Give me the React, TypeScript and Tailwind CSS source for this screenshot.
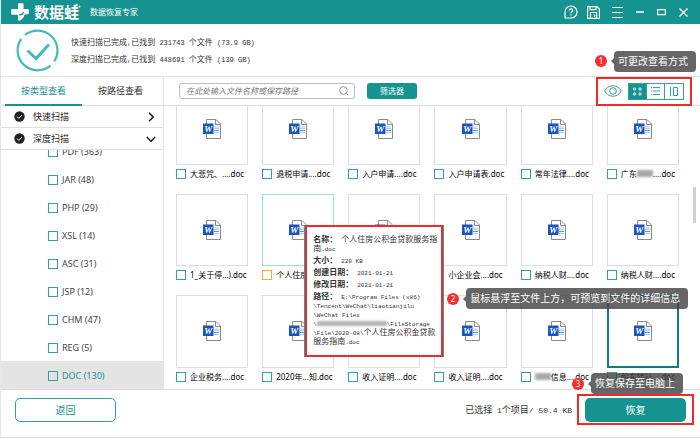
import React from "react";

const fileTypes = [
	{ name: "PDF", count: 363 },
	{ name: "JAR", count: 48 },
	{ name: "PHP", count: 29 },
	{ name: "XSL", count: 14 },
	{ name: "ASC", count: 31 },
	{ name: "JSP", count: 12 },
	{ name: "CHM", count: 47 },
	{ name: "REG", count: 5 },
	{ name: "DOC", count: 130, active: true },
];

type FileItem = {
	name: string;
	hidden?: "before" | "after";
	rest?: string;
	state?: "hover" | "selected";
};

const files: FileItem[] = [
	{ name: "大悲咒、....doc" },
	{ name: "退税申请....doc" },
	{ name: "入户申请....doc" },
	{ name: "入户申请表.doc" },
	{ name: "常年法律....doc" },
	{ name: "广东", hidden: "after", rest: "....doc" },
	{ name: "1_关于停...).doc" },
	{ name: "个人住房....doc", state: "hover" },
	{ name: "个人住房....doc" },
	{ name: "小企业会....doc" },
	{ name: "纳税人财....doc" },
	{ name: "纳税人财....doc" },
	{ name: "企业税务....doc" },
	{ name: "2020年...知.doc" },
	{ name: "收入证明....doc" },
	{ name: "收入证明....doc" },
	{ name: "信息....doc", hidden: "before" },
	{ name: "股东转让....doc", state: "selected" },
];

// "*" marks the part of the path that is masked out
const details = [
	{ term: "名称：", lines: ["个人住房公积金贷款服务指", "南.doc"] },
	{ term: "大小：", lines: ["220 KB"] },
	{ term: "创建日期：", lines: ["2021-01-21"] },
	{ term: "修改日期：", lines: ["2021-01-21"] },
	{
		term: "路径：",
		lines: [
			"E:\\Program Files (x86)",
			"\\Tencent\\WeChat\\liaotianjilu",
			"\\WeChat Files",
			"\\*\\FileStorage",
			"\\File\\2020-08\\个人住房公积金贷款",
			"服务指南.doc",
		],
	},
];

// Latin runs go in a narrow mono face, Chinese keeps the surrounding font
const Mixed: React.FC<{ text: string; latin: string }> = ({ text, latin }) => (
	<>
		{text.split(/([\x20-\x7e]+)/).map((part, i) =>
			i % 2 ? (
				<span key={i} className={`font-['Liberation_Mono',monospace] leading-none whitespace-pre ${latin}`}>{part}</span>
			) : (
				part
			)
		)}
	</>
);

const CheckBox: React.FC<{ className?: string }> = ({ className = "border-[#35a0a0]" }) => (
	<input type="checkbox" className={`size-[10px] shrink-0 appearance-none border ${className}`} />
);

const WordIcon: React.FC = () => (
	<svg width="18" height="20" viewBox="0 0 18 20" aria-hidden="true">
		<path d="M3.5.5h9.5l4.5 4.5v14.5h-14z" fill="#fff" stroke="#8a8a8a" />
		<path d="M12.5.5v5h5" fill="none" stroke="#8a8a8a" />
		<path d="M11 8h5M11 9.5h5" stroke="#a5d0f8" />
		<path d="M11 11.5h5" stroke="#4a97e6" />
		<path d="M11 13.5h5" stroke="#a5d0f8" />
		<rect x="0" y="4.5" width="10.5" height="10.5" fill="#1a55bf" />
		<text x="5.2" y="13" textAnchor="middle" fontSize="9" fontWeight="bold" fontStyle="italic" fontFamily="Liberation Serif, serif" fill="#fff">W</text>
	</svg>
);

const Callout: React.FC<{ number: number; text: string }> = ({ number, text }) => (
	<div className="flex items-center whitespace-nowrap">
		<span className="flex size-3 items-center justify-center rounded-full bg-[#f52f2f] text-[8px] text-white">{number}</span>
		<span className="ml-1 border-y-[3px] border-r-[3px] border-y-transparent border-r-[#666]" />
		<span className="rounded-sm bg-[#404040]/80 pr-2 pl-1 text-[10px] leading-[21px] text-white">{text}</span>
	</div>
);

const FileTooltip: React.FC = () => (
	<div className="absolute top-[31px] left-[42px] z-10 border-x border-[#35a0a0] text-[8px] leading-[9px] whitespace-nowrap text-[#333]">
		<dl className="flex h-[132px] w-[138px] flex-col gap-[3px] border-2 border-[#f02a2a] bg-white px-[6px] pt-[7px]">
			{details.map((detail) => (
				<div key={detail.term}>
					<dt className="float-left mr-1 h-[9px] font-bold">{detail.term}</dt>
					<dd>
						{detail.lines.map((line) => (
							<span key={line} className="block h-[9px]">
								{line.split("*").map((part, i) => (
									<React.Fragment key={i}>
										{i > 0 && <span className="inline-block h-[5px] w-[70px] bg-[#b5b5b5] blur-[1px]" />}
										<Mixed text={part} latin="text-[6px]" />
									</React.Fragment>
								))}
							</span>
						))}
					</dd>
				</div>
			))}
		</dl>
		<div className="absolute top-[63px] left-[142px]">
			<Callout number={2} text="鼠标悬浮至文件上方，可预览到文件的详细信息" />
		</div>
	</div>
);

const FileCard: React.FC<{ file: FileItem }> = ({ file }) => {
	const border =
		file.state === "selected" ? "border-2 border-[#147c7c]" : file.state === "hover" ? "border border-[#9adfdc]" : "border border-[#dedede]";
	const blurred = <span className="inline-block h-[7px] w-4 bg-[#a9a9a9] align-baseline blur-[1px]" />;

	return (
		<div className="relative">
			<div className={`flex aspect-square items-center justify-center ${border}`}>
				<WordIcon />
			</div>
			<label className="mt-1 flex h-[10px] items-center gap-1 text-[8px] whitespace-nowrap text-black">
				<CheckBox className={file.state === "hover" ? "border-[#f5a83c]" : "border-[#35a0a0]"} />
				<span>
					{file.hidden === "before" && blurred}
					{file.name}
					{file.hidden === "after" && blurred}
					{file.rest}
				</span>
			</label>
			{file.state === "hover" && <FileTooltip />}
		</div>
	);
};

const TitleBar: React.FC = () => (
	<header className="flex h-6 shrink-0 items-center bg-[#169290] pr-3 pl-[10px] text-white">
		<svg width="18" height="18" viewBox="0 0 18 18" aria-hidden="true">
			<path d="M7 1.5c0-.8.5-1.3 1.3-1.3h3c.8 0 1.3.5 1.3 1.3V6h4c.8 0 1.2.5 1.2 1.2v2.6c0 1-.5 1.5-1.2 1.5l-3 .2c-.5 2.5-2 4.8-4.8 6.1-1 .4-1.8-.2-1.8-1v-4.8H1.5c-.8 0-1.3-.5-1.3-1.3V7.3C.2 6.5.7 6 1.5 6H7z" fill="#fff" />
			<path d="M8 11.7c2.2.4 4-.5 4.8-2.4" fill="none" stroke="#169290" strokeWidth="1.2" />
		</svg>
		<h1 className="ml-[5px] text-[15px] leading-6 font-bold">数据蛙</h1>
		<svg className="mb-3 -ml-1" width="6" height="6" viewBox="0 0 6 6" aria-hidden="true">
			<circle cx="1.5" cy="2" r="1.2" fill="#fff" />
			<circle cx="4.5" cy="3.5" r="1" fill="#fff" />
		</svg>
		<p className="ml-[9px] text-[8px]">数据恢复专家</p>
		<div className="ml-auto flex items-center">
			<button type="button" aria-label="帮助">
				<svg width="14" height="14" viewBox="0 0 14 14" fill="none" stroke="#fff" strokeWidth="1.2">
					<path d="M1 13V7a6 6 0 1 1 6 6z" />
					<path d="M5.3 5.6c0-2.2 3.5-2.2 3.5 0C8.800 6.9 7 6.8 7 8.3M7 9.3v1.3" />
				</svg>
			</button>
			<button type="button" aria-label="保存" className="ml-[9px]">
				<svg width="13" height="13" viewBox="0 0 13 13" fill="none" stroke="#fff" strokeWidth="1.2">
					<path d="M.6.6h9.4l2.4 2.4v9.4H.6z" />
					<path d="M3 .6v3h6v-3M3.5 12.4V6.5h6v5.900M7.5 8.5v2.5" />
				</svg>
			</button>
			<button type="button" aria-label="菜单" className="ml-3">
				<svg width="11" height="11" viewBox="0 0 11 11" stroke="#fff"><path d="M0 .5h11M0 5.5h11M0 10.5h11" /></svg>
			</button>
			<button type="button" aria-label="最小化" className="ml-[13px]">
				<svg width="8" height="10" viewBox="0 0 8 10" stroke="#fff" strokeWidth="1.5"><path d="M0 5h8" /></svg>
			</button>
			<button type="button" aria-label="最大化" className="ml-[13px]">
				<svg width="9" height="10" viewBox="0 0 9 10" fill="none" stroke="#fff" strokeWidth="1.2"><path d="M.6 2.6h7.8v5H.6z" /></svg>
			</button>
			<button type="button" aria-label="关闭" className="ml-[13px]">
				<svg width="9" height="9" viewBox="0 0 9 9" stroke="#fff" strokeWidth="1.4"><path d="M.5.5l8 8M8.5.5l-8 8" /></svg>
			</button>
		</div>
	</header>
);

const ScanStatus: React.FC = () => (
	<section className="flex h-[53px] shrink-0 items-center gap-3 border-b border-[#e0e0e0] pl-[15px] text-[#333]">
		<svg width="43" height="43" viewBox="0 0 43 43" fill="none" stroke="#48b9bb" strokeWidth="2.2" aria-hidden="true">
			<path d="M9 5.9A20 20 0 0 1 38.2 32.5" />
			<path d="M34.5 36.7A20 20 0 0 1 5.2 10" />
			<path d="M11.5 21.5l8.5 8 13-14" strokeWidth="3" />
		</svg>
		<div className="text-[8px] leading-[17px]">
			<p><Mixed text="快速扫描已完成,已找到 231743 个文件 (73.9 GB)" latin="text-[7px]" /></p>
			<p><Mixed text="深度扫描已完成,已找到 448691 个文件 (139 GB)" latin="text-[7px]" /></p>
		</div>
	</section>
);

const SidebarGroup: React.FC<{ title: string; open?: boolean }> = ({ title, open }) => (
	<button type="button" className="flex h-[22px] shrink-0 items-center border-b border-[#dedede] pr-[7px] pl-[13px] text-[9px] text-[#222]">
		<svg width="11" height="11" viewBox="0 0 11 11" aria-hidden="true">
			<circle cx="5.5" cy="5.5" r="5.2" fill="#222" />
			<path d="M3 5.6l1.8 1.8L8 4" fill="none" stroke="#fff" />
		</svg>
		<span className="ml-2">{title}</span>
		<svg className="ml-auto" width="10" height="10" viewBox="0 0 10 10" fill="none" stroke="#111" strokeWidth="1.4" aria-hidden="true">
			<path d={open ? "M.8 3l4.2 4.2L9.2 3" : "M3 .8l4.2 4.2L3 9.2"} />
		</svg>
	</button>
);

const Sidebar: React.FC = () => (
	<aside className="flex w-[163px] shrink-0 flex-col border-r border-[#e3e7ea]">
		<div className="flex h-[29px] shrink-0 border-b border-[#dedede] px-1 text-[9px]">
			<button type="button" className="-mb-px w-1/2 border-b-2 border-[#169290] text-[#169290]">按类型查看</button>
			<button type="button" className="w-1/2 text-[#333]">按路径查看</button>
		</div>
		<SidebarGroup title="快速扫描" />
		<SidebarGroup title="深度扫描" open />
		<ul className="flex min-h-0 flex-1 flex-col justify-end overflow-hidden">
			{fileTypes.map((type) => (
				<li key={type.name} className={`shrink-0 ${type.active ? "bg-[#e4e4e4] text-[#169290]" : "text-[#444]"}`}>
					<label className="flex h-7 items-center gap-1 pt-[2px] pl-[47px] text-[9px] leading-[10px]">
						<CheckBox />
						{type.name} ({type.count})
					</label>
				</li>
			))}
		</ul>
	</aside>
);

const Toolbar: React.FC = () => (
	<div className="flex h-[29px] shrink-0 items-center border-b border-[#dedede] pr-4 pl-[15px]">
		<div className="flex h-4 w-44 items-center rounded-[3px] border border-[#bdbdbd] pr-[5px] pl-[6px]">
			<input
				type="search"
				aria-label="搜索文件"
				placeholder="在此处输入文件名称或保存路径"
				className="min-w-0 flex-1 text-[8px] italic outline-none placeholder:text-[#777]"
			/>
			<svg width="10" height="10" viewBox="0 0 10 10" fill="none" stroke="#999" aria-hidden="true">
				<circle cx="4.5" cy="4.5" r="3.8" />
				<path d="M7.2 7.2l2 2" />
			</svg>
		</div>
		<button type="button" className="ml-3 h-4 w-[50px] rounded-[3px] bg-[#169290] text-[8px] text-white">筛选器</button>

		{/* View mode switch */}
		<div className="relative ml-auto flex items-center gap-[6px]">
			<button type="button" aria-label="预览">
				<svg width="18" height="12" viewBox="0 0 18 12" fill="none" stroke="#35a0a0">
					<path d="M.7 6C4.5-1 13.5-1 17.3 6C13.5 13 4.5 13 .7 6z" />
					<circle cx="9" cy="6" r="3.3" />
				</svg>
			</button>
			<div className="flex h-[17px] divide-x divide-[#35a0a0] border border-[#35a0a0]">
				<button type="button" aria-label="图标视图" className="flex w-[18px] items-center justify-center bg-[#169290]">
					<svg width="9" height="9" viewBox="0 0 9 9" fill="none" stroke="#fff" strokeWidth=".8">
						<path d="M.5 1h2v2h-2zM6 1h2v2H6zM.5 6h2v2h-2zM6 6h2v2H6z" />
					</svg>
				</button>
				<button type="button" aria-label="列表视图" className="flex w-[18px] items-center justify-center">
					<svg width="9" height="8" viewBox="0 0 9 8" stroke="#35a0a0"><path d="M0 .5h1M2 .5h7M0 4h1M2 4h7M0 7.5h1M2 7.5h7" /></svg>
				</button>
				<button type="button" aria-label="分栏视图" className="flex w-[18px] items-center justify-center">
					<svg width="8" height="9" viewBox="0 0 8 9" fill="none" stroke="#35a0a0"><path d="M.5 0v9M3.5.5h4v8h-4z" /></svg>
				</button>
			</div>
			<span className="pointer-events-none absolute -inset-x-2 -inset-y-[6px] border-2 border-[#f02a2a]" />
			<div className="absolute -right-3 bottom-7">
				<Callout number={1} text="可更改查看方式" />
			</div>
		</div>
	</div>
);

const Footer: React.FC = () => (
	<footer className="flex h-[49px] shrink-0 items-start border-y border-[#dedede] px-[14px] pt-2">
		<button type="button" className="h-6 w-[101px] rounded-[5px] border border-[#35a0a0] text-[10px] text-[#169290]">返回</button>
		<p className="mr-[13px] ml-auto text-[9px] leading-6 text-[#333]">
			<Mixed text="已选择 1个项目/ 50.4 KB" latin="text-[8px]" />
		</p>
		<div className="relative flex">
			<button type="button" className="h-6 w-[101px] rounded-[5px] bg-[#169290] text-[10px] text-white">恢复</button>
			<span className="pointer-events-none absolute -inset-x-2 -top-1 -bottom-[3px] border-2 border-[#f02a2a]" />
			<div className="absolute right-[3px] bottom-7 z-20">
				<Callout number={3} text="恢复保存至电脑上" />
			</div>
		</div>
	</footer>
);

const App: React.FC = () => {
	return (
		<div className="flex h-screen flex-col overflow-hidden border-l border-[#e3e7ea] bg-white font-['Noto_Sans','Noto_Sans_CJK_SC',sans-serif]">
			<TitleBar />
			<ScanStatus />
			<div className="flex min-h-0 flex-1">
				<Sidebar />
				<main className="flex min-w-0 flex-1 flex-col">
					<Toolbar />
					<div className="relative min-h-0 flex-1 overflow-hidden">
						<div className="-mt-[13px] grid grid-cols-6 gap-x-[14px] gap-y-[15px] pr-[21px] pl-3">
							{files.map((file, index) => (
								<FileCard key={index} file={file} />
							))}
						</div>
						<span className="absolute top-[81px] right-1 h-9 w-[3px] bg-[#d0d0d0]" />
					</div>
				</main>
			</div>
			<Footer />
		</div>
	);
};
export default App;
